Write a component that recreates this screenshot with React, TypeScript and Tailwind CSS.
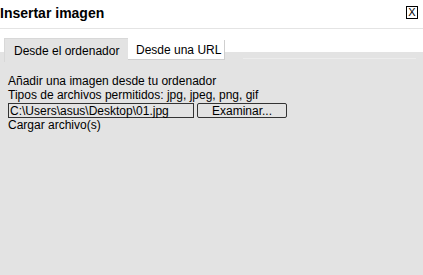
import React from "react";

export default function App() {
  return (
    <div
      className="w-[423px] h-[275px] bg-[#e3e3e3] flex flex-col overflow-hidden text-black"
      style={{ fontFamily: '"Liberation Sans", Arial, sans-serif' }}
    >
      <div className="h-[29px] bg-white border-b border-[#e4e4e4] flex items-center justify-between shrink-0">
        <div className="text-[14px] font-bold leading-none pl-0 -mt-[3px]">Insertar imagen</div>
        <div className="w-[12px] h-[13px] border border-black flex items-center justify-center text-[11px] leading-none mr-[5px] -mt-[3px]">
          X
        </div>
      </div>
      <div className="h-[23px] bg-white flex items-start pt-[9px] pl-[4px] shrink-0 relative z-10">
        <div className="h-[24px] w-[124px] bg-[#e3e3e3] border-l border-t border-[#d8d8d8] flex items-center pl-[9px] text-[12px]">
          Desde el ordenador
        </div>
        <div className="mt-[2px] h-[20px] w-[97px] bg-white border-r border-b border-[#cfcfcf] flex items-center pl-[8px] text-[12px]">
          Desde una URL
        </div>
      </div>
      <div className="flex-1 flex flex-col">
        <div className="mt-[6px] ml-[243px] mr-[7px] h-px bg-[#ececec]" />
        <div className="pt-[15px] pl-[8px] text-[12px] leading-[14px]">
          <div>Añadir una imagen desde tu ordenador</div>
          <div>Tipos de archivos permitidos: jpg, jpeg, png, gif</div>
          <div className="flex items-center gap-[3px] mt-[1px]">
            <div className="w-[186px] h-[15px] border border-[#333] flex items-center pl-[1px] leading-none">
              C:\Users\asus\Desktop\01.jpg
            </div>
            <div className="w-[90px] h-[15px] border border-[#333] rounded-[2px] flex items-center justify-center leading-none">
              Examinar...
            </div>
          </div>
          <div>Cargar archivo(s)</div>
        </div>
      </div>
    </div>
  );
}
